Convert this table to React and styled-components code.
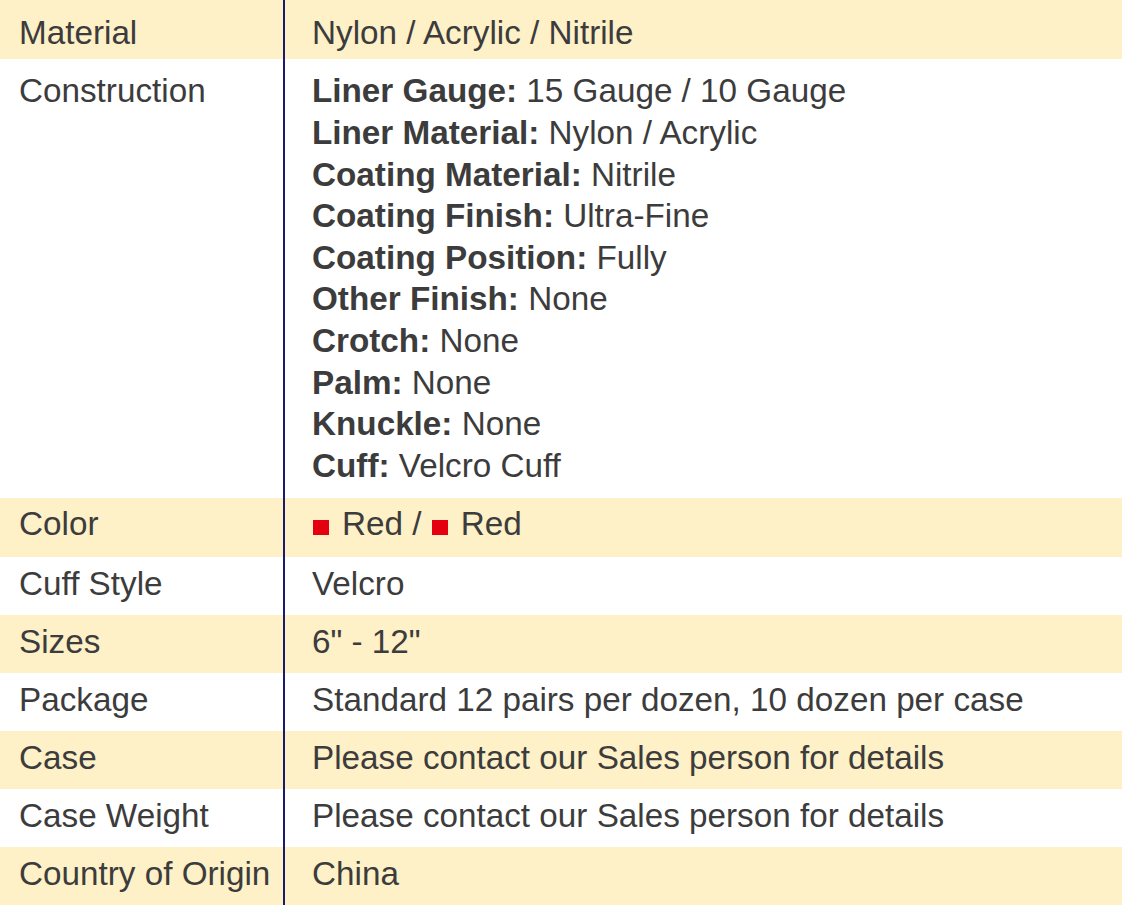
import React from "react";
import styled, { createGlobalStyle } from "styled-components";

const GlobalStyle = createGlobalStyle`
  html, body {
    margin: 0;
    padding: 0;
    background: #ffffff;
  }
  body {
    font-family: "Liberation Sans", Arial, sans-serif;
  }
`;

const SpecTable = styled.div`
  width: 1122px;
  display: flex;
  flex-direction: column;
  font-family: "Liberation Sans", Arial, sans-serif;
  font-size: 33.25px;
  line-height: 41.6px;
  color: #3c3c3c;
`;

const Row = styled.div`
  display: grid;
  grid-template-columns: 285px 1fr;
  background: ${(p) => (p.$shade ? "#fef0c7" : "#ffffff")};
`;

const LabelCell = styled.div`
  padding: ${(p) => p.$top}px 0 ${(p) => p.$bottom}px 19px;
  border-right: 2px solid #1b1b6b;
  white-space: nowrap;
`;

const ValueCell = styled.div`
  padding: ${(p) => p.$top}px 0 ${(p) => p.$bottom}px 27px;
  white-space: nowrap;
`;

const DetailList = styled.div`
  display: flex;
  flex-direction: column;
`;

const DetailKey = styled.b`
  font-weight: 700;
`;

const Swatch = styled.span`
  display: inline-block;
  width: 16px;
  height: 15px;
  margin: 0 13px 0 1px;
  background: ${(p) => p.$color};
`;

const construction = [
  ["Liner Gauge:", "15 Gauge / 10 Gauge"],
  ["Liner Material:", "Nylon / Acrylic"],
  ["Coating Material:", "Nitrile"],
  ["Coating Finish:", "Ultra-Fine"],
  ["Coating Position:", "Fully"],
  ["Other Finish:", "None"],
  ["Crotch:", "None"],
  ["Palm:", "None"],
  ["Knuckle:", "None"],
  ["Cuff:", "Velcro Cuff"],
];

const rows = [
  { label: "Material", value: "Nylon / Acrylic / Nitrile", top: 11.6, bottom: 5.8 },
  {
    label: "Construction",
    top: 11.4,
    bottom: 11.9,
    value: (
      <DetailList>
        {construction.map(([k, v]) => (
          <div key={k}>
            <DetailKey>{k}</DetailKey> {v}
          </div>
        ))}
      </DetailList>
    ),
  },
  {
    label: "Color",
    top: 4.8,
    bottom: 12.3,
    value: (
      <>
        <Swatch $color="#e5000f" />
        Red / <Swatch $color="#e5000f" />
        Red
      </>
    ),
  },
  { label: "Cuff Style", value: "Velcro" },
  { label: "Sizes", value: '6" - 12"' },
  { label: "Package", value: "Standard 12 pairs per dozen, 10 dozen per case" },
  { label: "Case", value: "Please contact our Sales person for details" },
  { label: "Case Weight", value: "Please contact our Sales person for details" },
  { label: "Country of Origin", value: "China" },
];

export default function App() {
  return (
    <>
      <GlobalStyle />
      <SpecTable>
        {rows.map((row, i) => {
          const top = row.top ?? 6.2;
          const bottom = row.bottom ?? 10.3;
          return (
            <Row key={row.label} $shade={i % 2 === 0}>
              <LabelCell $top={top} $bottom={bottom}>
                {row.label}
              </LabelCell>
              <ValueCell $top={top} $bottom={bottom}>
                {row.value}
              </ValueCell>
            </Row>
          );
        })}
      </SpecTable>
    </>
  );
}
